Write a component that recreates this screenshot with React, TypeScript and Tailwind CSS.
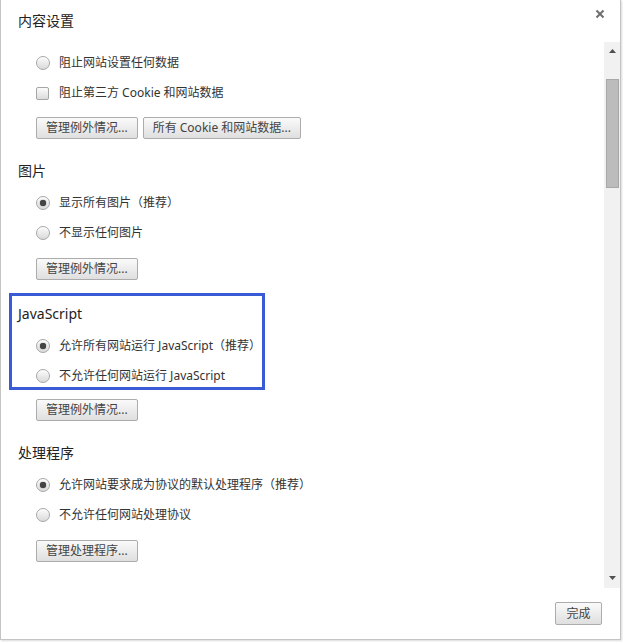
import React from "react";

const font = { fontFamily: '"Noto Sans", "Noto Sans CJK SC", sans-serif' };

function Radio({ checked }: { checked?: boolean }) {
  return (
    <span className="flex h-[14px] w-[14px] items-center justify-center rounded-full border border-[#a6a6a6] bg-gradient-to-b from-[#fbfbfb] to-[#dadada] shadow-[inset_0_1px_0_#fff]">
      {checked && <span className="h-[6px] w-[6px] rounded-full bg-[#444] shadow-[0_0_1px_#222]" />}
    </span>
  );
}

function Checkbox() {
  return (
    <span className="block h-[13px] w-[13px] rounded-[2px] border border-[#a6a6a6] bg-gradient-to-b from-[#fbfbfb] to-[#dcdcdc]" />
  );
}

function Option({ label, checked, box }: { label: string; checked?: boolean; box?: boolean }) {
  return (
    <div className="flex h-[30px] items-center pl-[18px]">
      <div className="flex w-[23px] justify-start">{box ? <Checkbox /> : <Radio checked={checked} />}</div>
      <span className="text-[12px] leading-none text-[#333]">{label}</span>
    </div>
  );
}

function Btn({ label, className = "" }: { label: string; className?: string }) {
  return (
    <button
      className={`h-[22px] rounded-[2px] border border-[#acacac] bg-gradient-to-b from-[#fafafa] to-[#dfdfdf] px-[9px] text-[12px] leading-none text-[#444] ${className}`}
      style={font}
    >
      {label}
    </button>
  );
}

function Heading({ text, className = "" }: { text: string; className?: string }) {
  return <div className={`flex h-[20px] items-center text-[14px] leading-none text-[#222] ${className}`}>{text}</div>;
}

export default function App() {
  return (
    <div className="h-[642px] w-[623px] bg-white" style={font}>
      <div className="flex h-[640px] w-[621px] flex-col border-b border-l border-r border-[#c4c4c4] bg-white shadow-[1px_1px_2px_rgba(0,0,0,0.15)]">
        {/* Header */}
        <div className="relative flex h-[42px] shrink-0 items-center pl-[17px]">
          <span className="text-[14px] leading-none text-[#222]">内容设置</span>
          <svg className="absolute right-[15px] top-[9px]" width="10" height="10" viewBox="0 0 10 10">
            <path d="M1.5 1.5 L8.5 8.5 M8.5 1.5 L1.5 8.5" stroke="#6e6e6e" strokeWidth="2" />
          </svg>
        </div>

        {/* Body */}
        <div className="flex h-[546px] shrink-0">
          <div className="flex-1 overflow-hidden pl-[17px] pt-[6px]">
            <Option label="阻止网站设置任何数据" />
            <Option label="阻止第三方 Cookie 和网站数据" box />
            <div className="mt-[9px] flex gap-[5px] pl-[18px]">
              <Btn label="管理例外情况..." />
              <Btn label="所有 Cookie 和网站数据..." />
            </div>

            <Heading text="图片" className="mt-[22px]" />
            <div className="mt-[7px]">
              <Option label="显示所有图片（推荐）" checked />
              <Option label="不显示任何图片" />
            </div>
            <div className="mt-[10px] flex pl-[18px]">
              <Btn label="管理例外情况..." />
            </div>

            <div className="relative mt-[24px]">
              <div className="pointer-events-none absolute left-[-9px] top-[-11px] h-[97px] w-[256px] border-[3px] border-[#3a5bd6]" />
              <Heading text="JavaScript" />
              <div className="mt-[7px]">
                <Option label="允许所有网站运行 JavaScript（推荐）" checked />
                <Option label="不允许任何网站运行 JavaScript" />
              </div>
            </div>
            <div className="mt-[8px] flex pl-[18px]">
              <Btn label="管理例外情况..." />
            </div>

            <Heading text="处理程序" className="mt-[22px]" />
            <div className="mt-[7px]">
              <Option label="允许网站要求成为协议的默认处理程序（推荐）" checked />
              <Option label="不允许任何网站处理协议" />
            </div>
            <div className="mt-[10px] flex pl-[18px]">
              <Btn label="管理处理程序..." />
            </div>
          </div>

          {/* Scrollbar */}
          <div className="flex w-[16px] shrink-0 flex-col bg-[#f1f1f1]">
            <div className="flex h-[18px] items-center justify-center">
              <svg width="7" height="4" viewBox="0 0 7 4">
                <path d="M0 4 L3.5 0 L7 4 Z" fill="#505050" />
              </svg>
            </div>
            <div className="mt-[19px] h-[109px] pl-[2px] pr-[1px]">
              <div className="h-full border border-[#a8a8a8] bg-[#bcbcbc]" />
            </div>
            <div className="flex-1" />
            <div className="flex h-[20px] items-center justify-center">
              <svg width="7" height="4" viewBox="0 0 7 4">
                <path d="M0 0 L7 0 L3.5 4 Z" fill="#505050" />
              </svg>
            </div>
          </div>
        </div>

        {/* Footer */}
        <div className="flex flex-1 items-start justify-end pr-[18px] pt-[14px]">
          <Btn label="完成" className="h-[23px] w-[47px] px-0 text-[#333]" />
        </div>
      </div>
    </div>
  );
}
